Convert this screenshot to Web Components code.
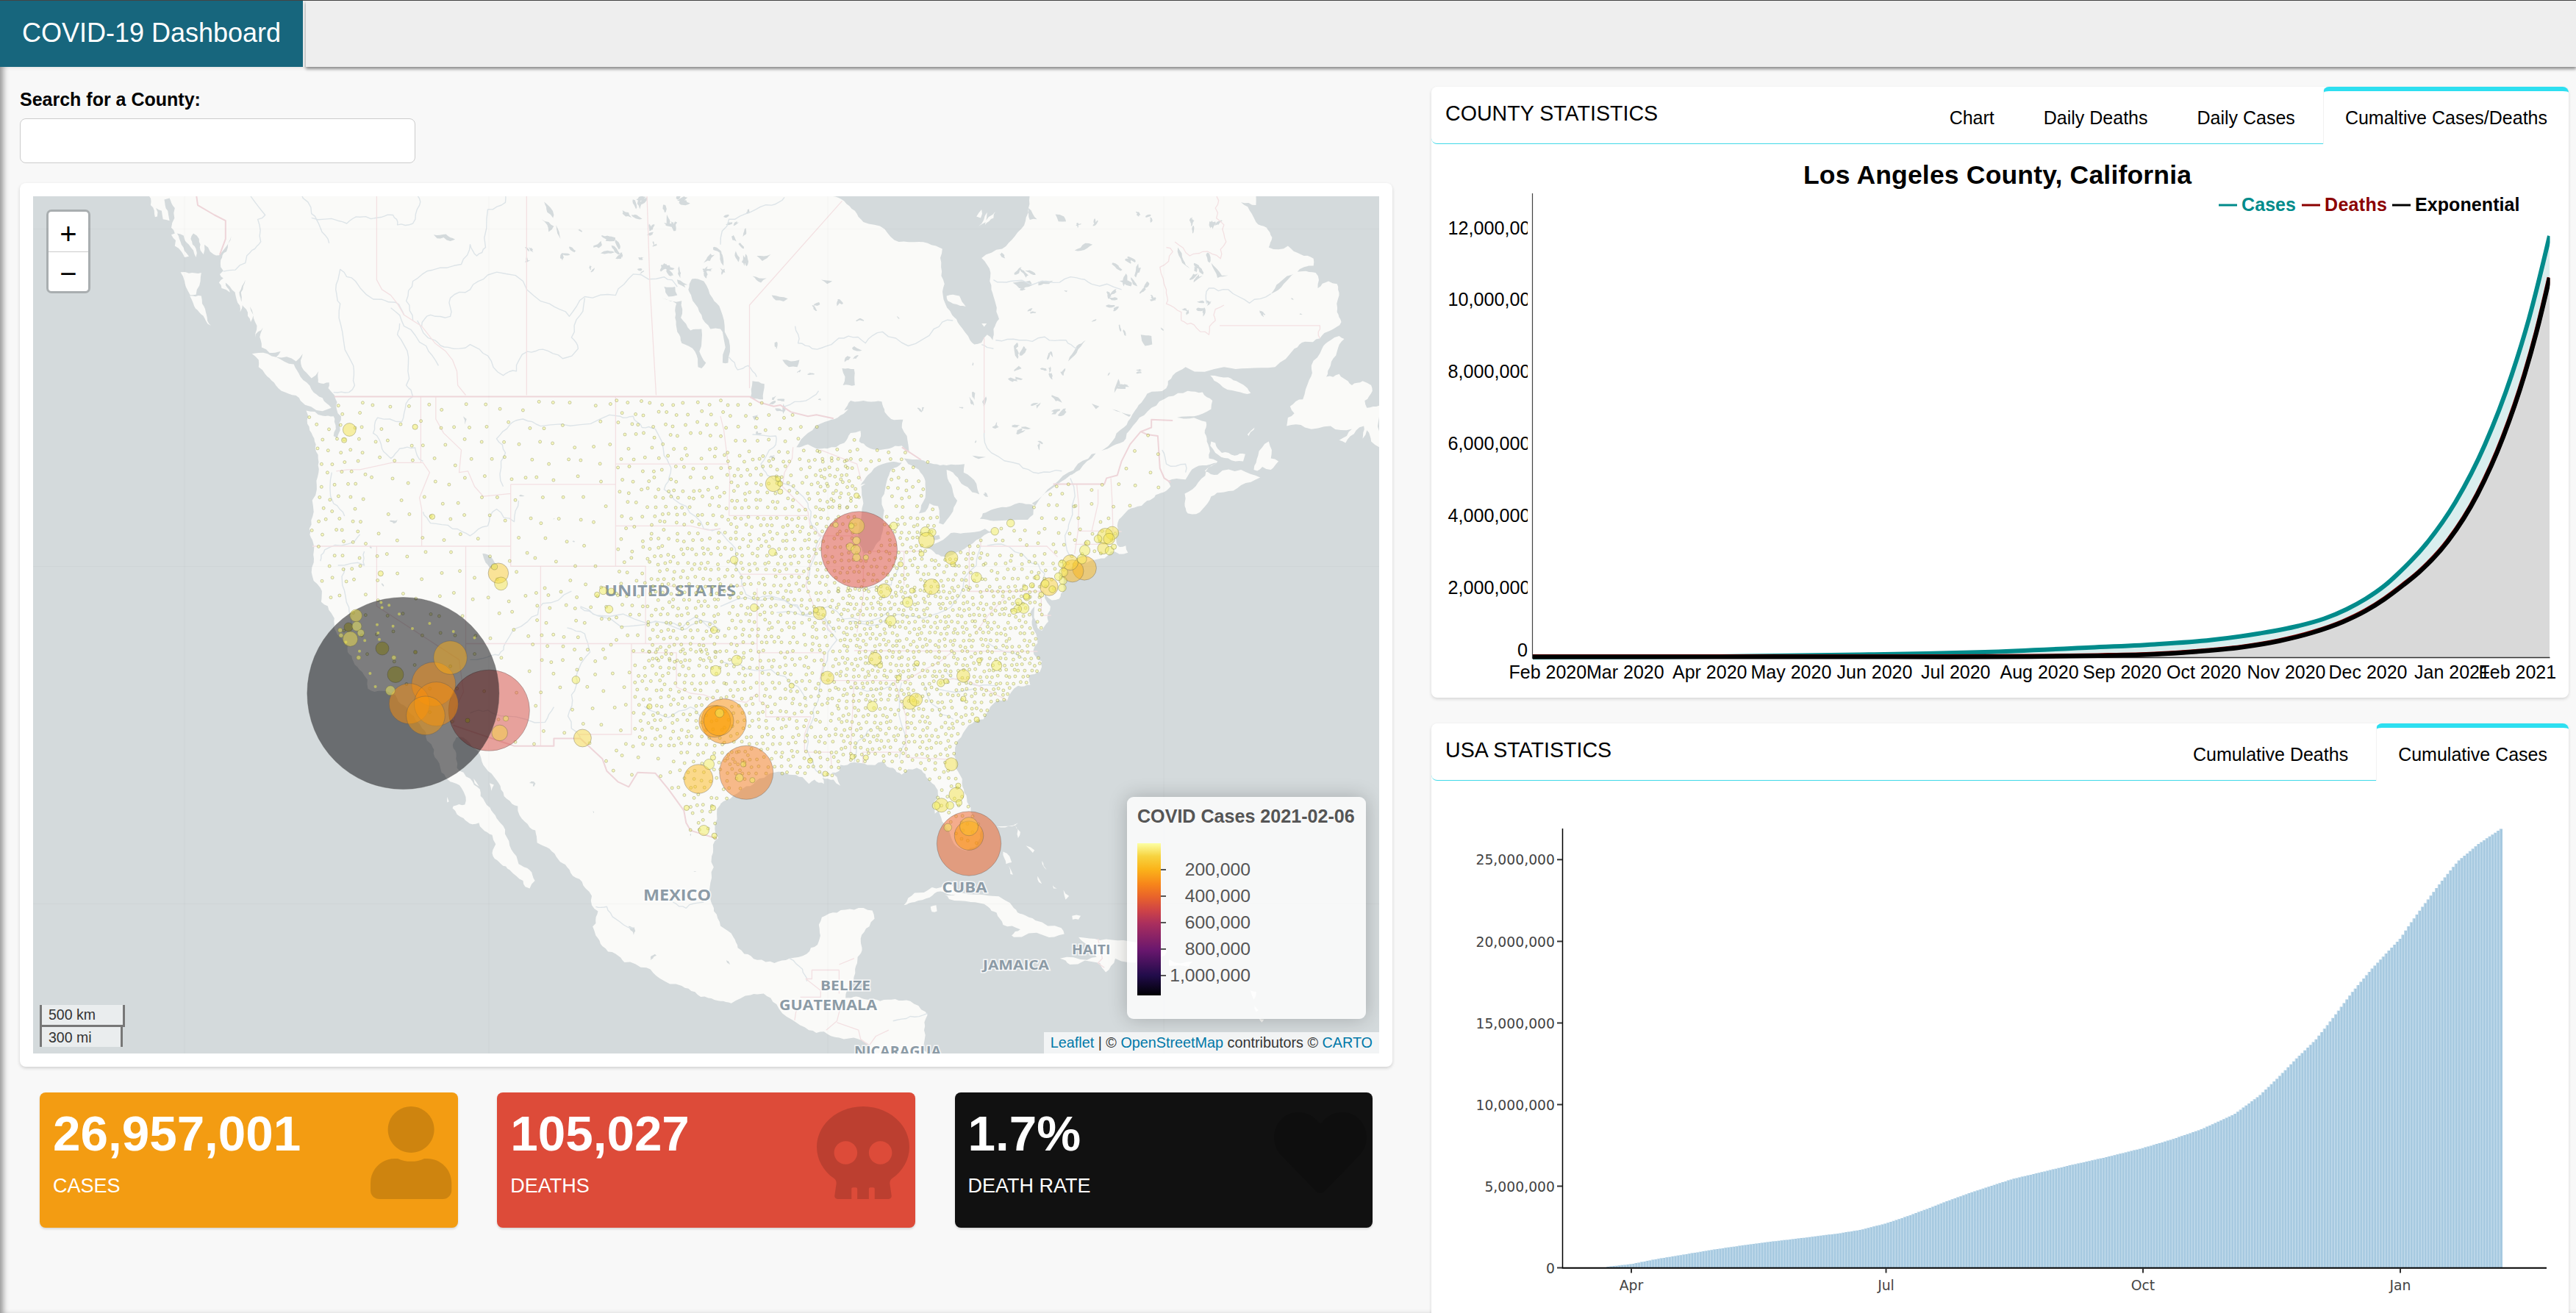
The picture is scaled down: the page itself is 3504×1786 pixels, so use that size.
<!DOCTYPE html>
<html lang="en">
<head>
<meta charset="utf-8">
<title>COVID-19 Dashboard</title>
<style>
html,body{margin:0;padding:0}
body{background:#f8f8f8;font-family:"Liberation Sans",Arial,sans-serif;color:#000;width:3504px;height:1786px;overflow:hidden}
</style>
</head>
<body>
<dash-app></dash-app>
<script>
const make=(name,html,init)=>{
  const t=document.createElement('template');t.innerHTML=html;
  customElements.define(name,class extends HTMLElement{
    constructor(){super();this.attachShadow({mode:'open'}).append(t.content.cloneNode(true));}
    connectedCallback(){if(init&&!this.ready){this.ready=true;init(this,this.shadowRoot);}}
  });
};

/* ---------- geography helpers ---------- */
const sheets={
  a:(x,y)=>[40+x/1.668,260+y/2.613],
  b:(x,y)=>[980+x/1.723,260+y/2.613],
  c:(x,y)=>[40+x/1.668,800+y/2.412],
  d:(x,y)=>[980+x/1.704,800+y/2.412]
};
const pts=s=>{
  let f=sheets.a;const out=[];
  s.trim().split(/\s+/).forEach(k=>{
    if(sheets[k]){f=sheets[k];return;}
    const [x,y]=k.split(',').map(Number);out.push(f(x,y));
  });
  return out;
};
let seed=7;
const rnd=()=>{seed|=0;seed=seed+0x6D2B79F5|0;let t=Math.imul(seed^seed>>>15,1|seed);t=t+Math.imul(t^t>>>7,61|t)^t;return((t^t>>>14)>>>0)/4294967296;};
const rough=(p,closed,amp)=>{
  for(let k=0;k<2;k++){
    const o=[];const n=p.length;
    for(let i=0;i<n;i++){
      o.push(p[i]);
      if(i===n-1&&!closed)break;
      const q=p[(i+1)%n],dx=q[0]-p[i][0],dy=q[1]-p[i][1],l=Math.hypot(dx,dy);
      if(l>7&&l<120){const j=(rnd()-.5)*amp*l;o.push([p[i][0]+dx/2-dy/l*j,p[i][1]+dy/2+dx/l*j]);}
    }
    p=o;
  }
  return p;
};
const d=(p,z)=>'M'+p.map(q=>q[0].toFixed(1)+' '+q[1].toFixed(1)).join('L')+(z?'Z':'');
const inside=(x,y,p)=>{let c=false;for(let i=0,j=p.length-1;i<p.length;j=i++){if((p[i][1]>y)!==(p[j][1]>y)&&x<(p[j][0]-p[i][0])*(y-p[i][1])/(p[j][1]-p[i][1])+p[i][0])c=!c;}return c;};

const west='a 692,725 698,750 697,775 707,800 705,850 698,878 690,870 692,820 690,800 665,798 628,780 630,815 640,860 650,900 655,950 656,1000 652,1060 645,1140 635,1200 642,1240 646,1265 645,1320 640,1355 645,1385 660,1410 662,1460 685,1500 692,1540 c 706,160 722,185 722,210 735,240 755,275 767,300 768,330 800,337 830,350 850,385 872,420 885,445 ';
const gulf='c 1563,820 1555,790 1560,725 1568,710 d 0,708 30,680 60,650 90,625 110,612 125,605 160,612 190,620 205,642 218,628 240,642 236,622 262,628 278,648 270,620 258,605 275,600 278,580 310,572 340,580 375,570 400,590 420,612 455,590 475,610 490,640 500,655 502,690 493,715 497,740 505,730 520,775 535,820 550,850 570,862 590,850 602,820 598,770 580,720 570,680 560,640 545,590 542,550 550,500 575,450 610,430 625,390 640,370 665,368 690,320 718,318 715,285 740,275 745,240 725,205 735,180 722,120 718,80 728,60 735,130 745,140 760,110 765,60 748,0 768,40 785,35 b 805,1415 803,1370 830,1330 870,1312 900,1305 915,1280 935,1290 955,1285 950,1260 935,1265 925,1230 930,1190 945,1150 970,1125 1000,1100 1020,1080 1045,1065 1055,1050 ';
const mainland=pts('a 268,5 275,50 285,92 290,90 287,60 300,70 303,100 318,105 314,70 306,30 318,25 330,60 322,130 330,150 322,155 332,175 330,195 345,215 352,235 362,232 345,190 335,150 350,158 362,190 378,235 378,205 366,170 372,150 385,170 388,210 395,225 397,190 410,215 418,225 430,228 445,200 458,160 447,215 434,245 434,270 440,283 432,295 440,310 430,325 436,345 455,360 445,325 455,340 470,385 478,430 484,400 476,360 490,315 480,360 492,420 502,465 508,440 500,410 512,465 512,520 530,485 525,530 527,555 545,575 570,570 560,590 605,605 620,578 618,625 640,665 656,640 655,680 680,680 678,700 '+west+
 ' 900,475 902,500 918,530 930,575 935,605 955,635 980,655 990,685 988,710 962,715 960,722 985,755 1005,775 1020,770 1028,790 1050,810 1058,840 1052,880 1070,905 1090,925 1105,945 1120,960 1125,980 1135,985 1147,960 1135,925 1110,905 1105,880 1088,830 1075,780 1060,755 1045,720 1033,700 1022,660 1000,625 985,605 970,590 968,560 962,525 968,490 985,490 1000,510 1022,545 1035,590 1060,630 1075,670 1095,708 1108,715 1112,745 1135,785 1148,795 1152,835 1180,855 1200,890 1220,915 1240,950 1262,985 1276,1010 1276,1040 1290,1060 1285,1100 1278,1110 1285,1140 1300,1175 1330,1200 1350,1228 1400,1245 1430,1280 1480,1305 1510,1325 1540,1345 1568,1355 d 25,1362 70,1335 100,1330 130,1365 165,1415 205,1450 240,1455 275,1475 320,1480 345,1500 355,1545 490,1545 470,1515 472,1450 480,1400 475,1390 440,1355 405,1348 370,1355 340,1350 315,1340 290,1345 303,1300 312,1250 318,1210 328,1180 325,1150 345,1110 357,1085 352,1058 310,1055 270,1065 235,1080 230,1130 225,1170 200,1200 160,1215 125,1230 85,1220 55,1200 40,1180 30,1145 0,1108 c 1553,1060 1545,1020 1548,950 1548,880 1555,830 '+gulf+
 ' 1048,1030 1090,1025 1100,1000 1130,975 1165,965 1135,995 1165,1008 1220,990 1265,1018 1220,1045 1180,1070 1150,1085 1130,1130 1115,1148 1095,1145 1088,1110 1088,1075 1120,1035 1145,980 1165,960 1145,950 1143,900 1135,860 1138,820 1100,808 1070,805 1110,800 1150,775 1153,745 1130,715 1095,710 1050,730 1010,770 975,820 950,880 920,905 870,950 830,1000 822,1010 830,985 870,935 918,890 945,840 965,795 980,760 1000,720 1045,700 1060,655 1090,625 1180,625 1235,630 1300,625 1345,560 1370,535 1405,523 1430,495 1455,465 1445,430 1450,370 1445,330 1425,320 1400,345 1395,290 1365,285 1320,330 1290,365 1310,325 1350,290 1390,265 1390,240 1360,225 1330,195 1285,200 1293,165 1280,130 1255,110 1245,80 1220,40 1255,50 1255,5');
const lands=[
 'a 505,578 520,575 560,590 600,615 615,660 640,705 665,735 685,770 665,782 615,745 612,735 580,715 555,680 535,650 520,625 520,600',
 'a 343,288 362,292 390,290 388,320 380,350 378,368 365,370 355,340 352,320',
 'a 364,372 390,372 392,400 402,440 412,478 400,460 385,430 372,400',
 'b 1450,515 1462,525 1445,570 1430,620 1420,660 1450,650 1460,665 1480,690 1505,675 1525,690 1528,710 1510,745 1515,770 1544,762 1544,910 1525,890 1515,850 1505,880 1508,835 1490,850 1465,895 1450,885 1480,845 1430,835 1370,840 1327,835 1330,805 1345,790 1335,765 1365,740 1380,670 1385,620 1410,560 1430,530',
 'b 1148,655 1190,662 1215,680 1235,700 1243,718 1210,712 1170,685',
 'b 1150,890 1160,895 1175,930 1205,940 1230,935 1225,960 1190,950 1160,930 1148,905',
 'b 1250,990 1260,940 1285,890 1292,920 1290,950 1308,960 1290,990 1270,980 1258,994',
 'b 530,372 545,368 560,372 575,410 562,408 545,400 533,390',
 'b 600,90 612,65 610,95','b 605,125 625,75 622,110','b 620,120 645,72 640,95','b 612,470 624,470 618,482',
 'b 1235,865 1252,840 1250,848 1238,870',
 'd 425,1040 450,1000 490,982 530,970 590,1005 630,1010 680,1050 700,1070 730,1090 790,1115 797,1135 750,1140 680,1145 675,1140 695,1120 655,1105 640,1065 620,1045 580,1030 530,1020 520,1005 545,1005 510,995 485,1015 450,1030',
 'd 487,1045 500,1040 502,1060 490,1062','d 830,1145 880,1155 935,1155 1000,1175 1035,1190 1030,1205 975,1220 915,1215 905,1240 893,1260 880,1230 810,1235 787,1215 850,1220 872,1210 850,1170',
 'd 1040,1218 1095,1225 1085,1243 1040,1240','d 655,865 670,880 675,900 662,905','d 668,910 678,940 672,938','d 815,1075 835,1075 830,1087 816,1087','d 640,782 690,770 660,785','d 680,770 695,800 690,820','d 708,845 728,860 724,868','d 735,945 745,970 738,965','d 795,990 808,1010 800,1022','d 745,895 756,925 750,915','d 770,975 780,985 772,985',
 'd 1228,1320 1242,1325 1236,1350','d 1238,1370 1247,1385 1242,1390','d 1248,1410 1260,1415 1255,1425','c 948,685 952,700 948,703','c 1008,625 1020,650 1010,640','c 1044,640 1054,645 1048,665'
];
const lakes=[
 'b 262,5 262,18 290,35 315,70 335,110 385,135 418,180 465,180 505,195 520,205 517,270 525,330 523,385 543,440 560,475 585,530 595,545 612,538 625,510 638,530 640,490 653,455 645,400 635,350 633,290 612,238 660,205 690,160 715,105 722,60 722,5',
 'b 178,910 205,860 245,820 275,805 300,775 290,780 305,745 345,748 378,748 385,785 400,810 428,812 425,840 437,870 440,900 442,928 425,905 395,915 375,920 345,910 325,890 328,852 305,860 290,895 250,915 225,915 205,900',
 'b 425,965 400,990 390,1030 378,1090 382,1180 375,1240 355,1280 335,1288 325,1250 325,1180 335,1110 330,1050 340,1040 328,1045 345,1010 360,985 380,970 400,962',
 'b 430,950 470,955 500,970 530,975 572,970 570,1000 600,1040 607,1078 590,1070 565,1040 545,1000 530,990 532,1020 545,1070 555,1100 540,1150 522,1185 512,1180 510,1120 490,1110 480,1140 465,1145 480,1090 480,1030 465,990 440,970',
 'b 480,1265 505,1290 530,1303 560,1280 600,1240 638,1212 620,1200 570,1215 540,1215 500,1255','b 497,1225 512,1222 515,1235 500,1240',
 'b 608,1165 640,1172 720,1168 733,1150 732,1115 700,1108 680,1120 640,1130 615,1145','b 730,1110 780,1045 830,990 832,1000 785,1048 738,1118',
 'a 1503,312 1530,320 1550,380 1568,420 b 10,500 20,530 18,610 5,610 5,500 a 1568,490 1545,490 1525,440 1505,390 1495,350',
 'a 1435,380 1455,392 1480,390 1478,450 1500,495 1525,490 1520,570 1535,610 1525,630 1517,625 1510,570 1480,540 1470,500 1465,450 1468,400',
 'a 1440,340 1465,340 1470,370 1450,375','a 1028,1288 1040,1292 1052,1310 1060,1345 1045,1340 1035,1320','a 917,155 945,153 966,172 955,178 940,165 925,168',
 'a 1162,100 1178,110 1190,125 1178,145 1175,120','a 1168,38 1190,85 1188,95 1175,75','a 1195,120 1205,170 1198,150',
 'b 285,630 313,632 315,690 287,690 292,660','b 685,325 725,318 730,335 700,345','b 745,322 780,318 770,330 745,335','b 1150,255 1175,300 1190,300 1165,308','b 1072,200 1085,245 1100,275 1082,255',
 'b 830,210 855,185 872,190 845,212','b 785,82 805,90 810,108 792,108','b 722,60 742,100 725,102','b 870,755 888,765 880,775','b 75,675 103,685 100,740 70,735 72,705','b 815,605 835,550 856,530 835,575','b 75,800 88,795 80,815','b 590,940 622,945 605,952','b 985,510 1010,515 1012,545 995,550','b 918,775 962,795 958,802',
 'b 120,370 158,382 148,392 130,388','b 145,600 165,605 185,600 180,625 160,625','b 75,302 108,310 95,325','b 85,230 118,225 98,248','b 236,315 262,320 250,330','a 984,800 992,810 988,830'
];
const blobs='b 45,170 12 45,222 14 10,278 9 65,70 7 25,100 10 222,408 9 275,396 9 327,457 8 417,450 5 132,546 9 308,580 11 185,640 6 215,645 7 128,745 9 232,740 6 150,765 12 470,778 8 565,770 5 660,230 9 715,295 14 712,345 9 730,430 8 810,355 5 836,120 7 880,112 9 1103,122 10 1155,118 12 980,80 8 1005,95 8 948,250 14 965,300 16 985,340 12 1015,375 9 925,400 12 915,370 10 875,460 6 942,495 9 705,570 14 775,585 9 800,640 9 770,650 10 690,655 12 785,765 14 740,765 9 605,750 12 712,850 12 690,840 9 745,900 8 650,830 9 598,890 6 940,680 16 980,640 8 910,650 5 1125,260 14 1120,300 14 1120,410 10 1090,425 8 1140,400 8 1270,435 8 1340,383 5 620,1080 7 592,615 5 1360,437 4 1035,490 5 120,945 7 90,860 7 a 1135,215 9 1125,248 7 1220,230 11 1274,275 7 1302,195 16 1348,210 14 1345,235 8 1392,245 7 1390,285 7 1370,60 14 1385,35 14 1400,135 10 1420,190 7 1455,90 16 1455,130 10 1490,38 14 1312,160 9 1440,285 14 1462,300 14 1560,235 16 1545,270 12 1250,140 6 825,1168 8 774,1265 6 1117,1082 6 1408,1318 4 802,1400 5 1235,1245 4 1190,1165 3 d 18,1228 6 c 1365,1125 9 1410,1215 9 1143,640 7 1280,735 3 1510,930 3 1500,810 3';
const admin=[
 'a 788,5 788,315 800,350 820,370 835,400 850,440 875,465 890,480 920,540 945,570 960,600 970,640 972,690 990,725','a 1128,5 1128,725','a 1401,5 1408,340 1422,725','b 285,35 68,405 68,700','b 618,520 618,860',
 'a 888,730 888,965','a 696,995 722,990 750,990 822,965 893,965 908,1000 885,1090 890,1130 890,1262','a 922,730 922,810 940,860 980,920 975,1000 995,995 1010,1050 1030,1085 1092,1075','a 1092,1042 1330,1042 1330,730','a 1092,1042 1092,1333 1330,1333 1330,1042','a 642,1262 1092,1262','a 788,1262 788,1475 c 975,235 985,340 965,400 965,440','a 990,1262 c 990,182 990,225','a 1330,970 1568,970 b 18,970','a 1330,1190 1500,1190 1540,1205 1568,1200','a 1330,1333 1398,1333 1398,1404 1568,1404 b 55,1404','a 1160,1333 c 1160,518','c 990,182 1568,182 d 85,182','c 1366,182 1366,480 1245,480','c 1366,212 1468,212 1468,325 1500,345 1530,350 1568,370','c 1398,0 1398,182',
 'b 0,800 8,850 18,970 22,1010 20,1153','b 20,1153 205,1153','b 45,1362 195,1362','b 228,1225 325,1225','b 583,1260 583,1423 750,1423','b 610,1240 610,1262 765,1262 790,1300','b 345,1280 470,1280','b 430,1280 430,1400','b 170,910 168,950 150,1000 145,1050 205,1140 210,1190 240,1230 210,1320 200,1400 225,1500 260,1568','b 335,1280 335,1440 320,1568','b 235,920 320,970 330,1030','b 915,1020 918,1100 920,1210','b 838,1208 920,1208 940,1210','b 830,1255 900,1255','b 835,1040 840,1120 838,1210 830,1290','b 752,1423 752,1508 775,1508','b 885,1060 885,1110 870,1210',
 'd 85,0 85,212 240,212 240,242 230,300','d 90,212 90,370 105,385 105,422 210,422','d 85,345 60,375 0,360','d 235,303 440,303','d 510,303 560,295 590,315 665,368','d 310,205 735,208','d 310,303 300,570','d 403,303 430,420 430,555 530,562','d 195,538 255,538 258,590','d 330,575 330,538 420,538','d 430,303 470,270 510,240 540,205','d 210,422 195,480 195,538','d 575,10 750,10','d 660,30 620,90 590,150','d 875,1150 885,1215 875,1230 890,1245',
 'd 275,1253 212,1253 212,1282 198,1282 232,1320 232,1342 185,1342','d 275,1253 275,1330','d 172,1418 175,1390 185,1370','d 245,1450 270,1420 275,1392 280,1370','d 270,1425 320,1450 325,1480 345,1500 360,1470 390,1450','d 275,1235 310,1215'
];
const nation=['a 692,730 1568,730 b 68,730 90,750 125,765 140,760 165,785 205,800 225,795 265,808','b 780,1041 900,1041 905,1020 930,1010 940,960 960,900 985,855 1000,865 1025,870 1030,985 1040,1020 1055,1035','b 985,855 1010,840 1010,812 1060,815','c 962,450 1100,518 1190,518 1190,493 1250,493 1300,560 1310,600 1335,635 1360,652 1380,605 1420,607 1450,660 1485,730 1490,770 1500,795 1560,822','a 378,5 382,50 420,85 445,105 445,170 432,225','b 425,910 470,955'];
const labrador=['b 1165,5 1160,60 1180,120 1185,180 1172,240 1130,215 1100,230 1065,180','b 1045,200 1060,215 1030,270 1045,350 1045,400 1080,430 1080,460 1110,475 1145,510 1160,460 1160,420 1180,405','b 1170,478 1405,478 1405,523'];
const rivers=['a 502,18 535,85 518,100 525,180 505,210 490,255 440,285','a 615,5 640,80 660,130 680,185','a 640,95 700,105 720,115 750,92 800,92 825,85 835,120 870,115 885,50 878,5','a 1080,5 1080,40 1040,65 1035,200 1015,230 1000,190 980,260 915,280 870,320 855,390 870,460','a 690,715 725,715 738,690 735,620 710,500 705,400 695,350 705,278 740,320 800,385 830,395 850,440','a 820,415 850,480 900,550 928,620','a 890,480 910,440 955,445 955,380 1000,350 1040,298 1120,320 1180,400 1225,445 1260,375 1330,370 1370,295 1440,305 1470,340','a 880,460 920,530 950,555 1000,545 1040,585 1075,655 1105,640 1130,570 1165,562 1210,595 1245,560 1230,520 1250,440 1260,380','a 840,470 835,510 860,590 855,690 870,730 850,790 845,820 790,805 780,860 800,915 820,950 840,915 875,912 893,960','a 1075,1050 1070,960 1080,930 1060,880 1090,830 1120,810 1160,835 1250,830 1340,800 1370,800 1390,840 1420,845 1440,940 1455,1000 1440,1060 1490,1120 1530,1200 1568,1200','a 893,1140 910,1180 960,1200 1000,1225 1040,1190 1060,1130 1100,1175 1110,1100','a 660,1315 670,1275 720,1255 750,1220','a 700,1330 760,1330 760,1280','a 686,1000 690,1110 715,1155','a 715,1340 710,1400 725,1480 730,1540','a 1250,1480 1290,1510 1400,1540 1480,1560 1520,1525 1568,1560',
 'c 1000,235 1030,230 1065,220 1080,180 1130,110 1165,50 1230,10','c 1220,130 1260,150 1272,210 1240,290 1230,350 1222,420 1250,490','c 1000,410 1040,400 1080,420 1170,440 1190,390','c 1250,60 1290,90 1400,115 1480,130 1510,95 1568,140','c 1395,388 1450,425 1500,390 1530,430','c 1285,1045 1310,1045 1330,1085 1370,1115','c 1460,1030 1490,1050 1530,1030',
 'b 0,190 20,100 70,75 120,50 150,22','b 175,480 182,540 215,560 260,545 300,515 340,540 380,500 440,550 500,490 545,460','b 20,590 40,635 65,620 85,660','b 640,315 680,320 780,325 835,308 870,330 940,350','b 645,530 700,530 760,518 810,530 835,560','b 1140,400 1145,345 1190,350 1240,398 1290,365','b 618,850 635,930 700,970 745,1003 800,995','b 150,765 200,745 230,710','b 75,865 130,870 125,910 95,970 110,1010 150,1040 205,1110 210,1170 235,1230 215,1320 200,1400','b 0,1210 35,1270 50,1400 80,1455 150,1455 200,1510 250,1530 270,1568','b 1035,920 1045,970 1090,970 1090,1000','b 820,1020 825,1150 815,1200 820,1300','b 610,1260 600,1330 560,1440 510,1500 440,1510 350,1545 300,1530','b 640,560 612,545','b 340,1420 400,1400 420,1320','b 625,1260 660,1255 720,1310 760,1360 750,1410',
 'd 0,60 80,40 150,40 200,90 240,90 270,170 240,260 215,400 200,480 215,570 240,620','d 0,240 80,270 150,290 200,370','d 130,80 250,60 330,110 400,60','d 300,330 380,330 400,310','d 470,310 490,380 540,430','d 420,310 420,450 415,560','d 350,460 320,500 310,570','d 500,330 590,330','d 520,270 600,320 640,320','d 620,180 700,230','d 400,1420 440,1405 480,1395','d 160,1215 190,1250 200,1290'];
const us=pts(west+' 962,450 1100,518 1190,518 1190,493 1250,493 1300,560 1310,600 1360,652 1380,605 1420,607 1450,660 1485,730 1500,795 1560,822 '+gulf+' 1040,1020 1028,960 1025,870 985,855 940,960 930,1010 900,1020 900,1041 780,1041 b 732,1115 640,1172 635,1210 560,1280 505,1290 480,1265 515,1180 545,1100 500,970 430,925 395,915 325,850 265,808 205,800 165,785 125,765 68,730 a 692,730');

const big=`c 1043,401 92 #d4483f
c 848,345 218 #000004
b 325,1274 89 #db4538
c 917,315 50 #f98e09
c 862,379 46 #f98e09
c 923,380 50 #f98e09
c 899,418 44 #f99a0a
c 955,228 38 #fbac11
d 60,605 61 #f4771a
d 576,838 73 #ee5d21
d 576,812 33 #fb9706
d 576,782 21 #fbc127
d 8,437 51 #f98e09
c 1555,437 36 #fb9b06
c 1564,435 34 #fba40a
c 1518,626 33 #fbb81c
a 1064,1358 23 #f9cb35
b 853,1340 28 #fbb81c
b 825,1350 26 #fbb81c
b 820,1320 18 #f6d746
b 770,1406 21 #f8cd37
c 1255,492 20 #f6d746
c 1067,475 18 #f6d746`;
const mid='a 726,848 15 714,885 6 875,838 6 914,1157 6 1070,1395 15 1055,1335 7 797,1359 6 1302,1420 9 1320,1422 7 1288,1434 6 1315,1486 9 1553,1560 8 c 741,90 14 743,125 11 728,167 17 752,147 8 705,138 5 707,155 5 747,228 5 827,228 5 819,336 11 1081,428 6 1240,301 9 1407,388 6 1542,578 12 1551,556 6 1491,721 6 1551,721 6 1530,795 12 1554,812 6 1557,271 12 1566,410 10 d 38,237 12 248,294 15 358,232 15 370,254 6 78,64 9 230,82 15 221,72 6 395,107 12 434,46 12 563,288 15 640,254 12 600,237 6 511,311 9 523,305 6 439,375 16 453,366 15 352,388 12 563,363 6 594,431 6 455,246 6 413,294 6 165,320 6 535,578 15 547,678 17 512,712 16 500,714 9 532,713 9 551,648 6 553,704 7 527,785 9 306,553 6 337,556 6 243,609 6 208,566 6 53,578 6 44,622 9 74,630 6 703,66 12 691,45 8 710,30 8 689,68 9 680,76 7 b 124,1040 18 135,1022 6 140,1040 6 140,1068 6 319,1082 6 319,1190 18 307,1190 6 319,1242 9 304,1264 9 317,1275 11 319,1302 9 341,1302 6 270,1186 6 406,1190 9 480,1210 11 496,1213 9 483,1241 18 471,1289 6 545,1326 6 541,1303 15 422,1326 6 680,1180 9 643,1209 9 600,1373 12 495,1406 18 384,1420 16 449,1420 6 122,1283 9 32,1311 9 918,1215 15 902,1226 18 885,1236 9 911,1236 13 897,1270 13 912,1278 10 922,1264 6 854,1277 12 847,1308 11 804,1355 10 803,1385 9 801,1410 9 801,1325 9 792,1370 9 742,1373 6 730,1401 6 714,1410 6 761,1395 9 778,1415 8 860,1250 6 752,1434 6 717,1440 7';
const tinyOverBay='789,120 791,147 794,168 800,64 816,56 839,85 825,125 869,133 908,116 962,142 761,172 749,207 773,280 785,323 798,47 718,177 1010,163';
const zones=[ // x0 y0 x1 y1 spacing
 [410,540,500,800,16],[500,540,837,640,25],[500,640,720,800,26],[720,640,837,800,28],[410,800,720,880,25],[410,880,720,1020,38],[720,800,837,900,18],[720,900,861,1020,26],[820,1020,910,1080,22],
 [837,540,985,660,15],[837,660,880,740,17],[880,660,985,740,11.5],[837,740,880,870,15],[880,740,985,900,10.2],[861,880,985,1020,10.7],[910,1020,1020,1170,11.5],
 [985,540,1110,620,17],[985,620,1160,700,11],[985,700,1140,860,10],[985,860,1140,1060,10.4],
 [1110,580,1300,700,13],[1140,700,1340,800,9.4],[1140,800,1420,960,8.3],[1140,960,1330,1030,8.9],[1140,1030,1400,1160,12],
 [1340,650,1460,760,16],[1340,760,1470,800,11],[1460,580,1620,700,24],[1460,700,1560,770,15],[1330,960,1430,1030,9.5]
];

make('geo-canvas',`<style>:host{display:block;width:1831px;height:1166px}svg{display:block}
text{font-family:"Open Sans","Noto Sans",sans-serif;font-weight:700;fill:#8c9ba6;paint-order:stroke;stroke:#fff;stroke-opacity:.75;stroke-width:3px}</style>
<svg width="1831" height="1166" viewBox="45 267 1831 1166"></svg>`,(el,r)=>{
  const svg=r.querySelector('svg');let h='<rect x="45" y="267" width="1831" height="1166" fill="#d4dadc"/>';
  h+='<path fill="#fafaf8" d="'+d(rough(mainland,true,.28),true)+'"/>';
  const lk=lakes.map(pts);
  h+='<path fill="#d4dadc" d="'+lk.map(p=>d(rough(p,true,.2),true)).join('')+'"/>';
  h+='<path fill="#fafaf8" d="'+lands.map(s=>d(rough(pts(s),true,.26),true)).join('')+'"/>';
  let f=sheets.a,bp='';const tk=blobs.split(' ');
  for(let i=0;i<tk.length;){
    if(sheets[tk[i]]){f=sheets[tk[i++]];continue;}
    const [x,y]=f(...tk[i].split(',').map(Number)),s=+tk[i+1];i+=2;
    const n=s>9?3:s>6?2:1;
    for(let k=0;k<n;k++){
      const cx=x+(rnd()-.5)*s*(n-1)*.8,cy=y+(rnd()-.5)*s*(n-1)*.8,tilt=rnd()*3.1,q=[];
      for(let a=0;a<9;a++){const t=a/9*6.283,rr=s*.42*(.4+rnd()*.9),u=Math.cos(t)*rr*1.3,v=Math.sin(t)*rr*.5;q.push([cx+u*Math.cos(tilt)-v*Math.sin(tilt),cy+u*Math.sin(tilt)+v*Math.cos(tilt)]);}
      bp+=d(q,true);
    }
  }
  h+='<path fill="#d4dadc" d="'+bp+'"/>';
  h+='<g fill="none" stroke-linejoin="round"><path stroke="#dde4e8" stroke-width="1.4" d="'+rivers.map(s=>d(rough(pts(s),false,.3))).join('')+'"/>';
  h+='<path stroke="#f3e0e2" stroke-width="1.3" d="'+admin.map(s=>d(pts(s))).join('')+labrador.map(s=>d(rough(pts(s),false,.4))).join('')+'"/>';
  h+='<path stroke="#eed5d9" stroke-width="2" d="'+nation.map(s=>d(pts(s))).join('')+'"/>';
  h+='<path stroke="#000" stroke-opacity=".025" d="M251 267V1433M665 267V1433M1126 267V1433M1583 267V1433M45 311.500H1876M45 770.500H1876M45 1229.500H1876"/></g>';
  const T=(x,y,w,s,t)=>`<text x="${x}" y="${y}" font-size="${s}" textLength="${w}" lengthAdjust="spacingAndGlyphs">${t}</text>`;
  h+=T(822,811,179,20.5,'UNITED STATES')+T(875,1225,92,20.5,'MEXICO')+T(1281.5,1213.500,61,19.500,'CUBA')+T(1458,1297.500,52.500,17,'HAITI')+T(1337,1319,90,17.500,'JAMAICA')+T(1116,1347,68,18,'BELIZE')+T(1060,1373.500,133,19,'GUATEMALA')+T(1162,1437,118,19,'NICARAGUA');
  let dots='';
  const C=(x,y,rad)=>`M${(x-rad).toFixed(1)} ${y.toFixed(1)}a${rad} ${rad} 0 1 0 ${2*rad} 0a${rad} ${rad} 0 1 0 ${-2*rad} 0`;
  zones.forEach(([x0,y0,x1,y1,s])=>{
    let row=0;
    for(let y=y0+s/2;y<y1;y+=s,row++)for(let x=x0+(row%2?s*.75:s*.3);x<x1;x+=s){
      const px=x+(rnd()-.5)*s*.6,py=y+(rnd()-.5)*s*.5;
      if(rnd()<.05)continue;
      if(!inside(px,py,us)||lk.some(p=>inside(px,py,p)))continue;
      dots+=C(px,py,2);
    }
  });
  h+='<path fill="#f6f88a" fill-opacity=".5" stroke="#5c6420" stroke-opacity=".3" stroke-width="1" d="'+dots+'"/>';
  big.split('\n').forEach((l,i)=>{const [k,xy,rr,c]=l.split(' ');const [x,y]=sheets[k](...xy.split(',').map(Number));
    h+=`<circle cx="${x}" cy="${y}" r="${rr/(k==='b'?1.715:1.67)}" fill="${c}" fill-opacity=".5" stroke="#555" stroke-opacity=".35"/>`;
    if(i===1)h+='<g fill="#77720a" fill-opacity=".5" stroke="#333" stroke-opacity=".3"><circle cx="520" cy="882" r="9"/><circle cx="538" cy="917.500" r="11"/><circle cx="474" cy="853" r="6"/><circle cx="565" cy="887" r="2.500"/><circle cx="636" cy="980" r="3"/></g><path fill="#c8c860" fill-opacity=".8" d="'+tinyOverBay.split(' ').map(p=>C(...sheets.c(...p.split(',').map(Number)),2)).join('')+'"/>';
  });
  f=sheets.a;const mt=mid.split(' ');
  for(let i=0;i<mt.length;){
    if(sheets[mt[i]]){f=sheets[mt[i++]];continue;}
    const [x,y]=f(...mt[i].split(',').map(Number)),s=+mt[i+1];i+=2;
    h+=`<circle cx="${x.toFixed(1)}" cy="${y.toFixed(1)}" r="${(s/1.69).toFixed(1)}" fill="${s>12?'#f2e14c':'#f1ee5e'}" fill-opacity=".5" stroke="#6b6b30" stroke-opacity=".35"/>`;
  }
  svg.innerHTML=h;
});

make('zoom-control',`<style>:host{display:flex;flex-direction:column;width:54px;border:3.500px solid rgba(0,0,0,.2);border-radius:7px;background:#fff;background-clip:padding-box;overflow:hidden}
span{box-sizing:border-box;display:flex;align-items:center;justify-content:center;height:54px;padding-top:5px;font-size:40px;line-height:48px}span+span{border-top:1px solid #ccc}</style><span>+</span><span>−</span>`);

make('scale-bar',`<style>:host{display:block;font-size:19.500px;color:#333}div{box-sizing:border-box;border:3px solid #777;border-top:0;background:rgba(255,255,255,.5);padding-left:9px;line-height:27px}
.k{width:116px;height:30px}.m{width:113px;height:27px;border-bottom:0;line-height:29px}</style><div class="k">500 km</div><div class="m">300 mi</div>`);

make('map-attribution',`<style>:host{display:block;background:rgba(255,255,255,.7);font-size:19.800px;line-height:29px;height:29px;padding:0 9px;color:#333;white-space:nowrap}a{color:#0078a8;text-decoration:none}</style><a>Leaflet</a> | © <a>OpenStreetMap</a> contributors © <a>CARTO</a>`);

make('case-legend',`<style>:host{display:block;box-sizing:border-box;width:325px;height:302px;background:rgba(255,255,255,.8);border-radius:9px;box-shadow:0 0 26px rgba(0,0,0,.22);padding:9px 14px;color:#555}
b{display:block;font-size:25.100px;line-height:35px;white-space:nowrap}.row{display:flex;margin-top:19px;height:207px}
.bar{width:32px;background:linear-gradient(#fcffa4 0,#f7d340 8.500%,#fbb41a 17%,#f7851a 27%,#e9642a 35%,#cf4446 44%,#a92e5e 53%,#6a176e 70%,#210c4a 87%,#000004 100%)}
ul{margin:0;padding:18px 0 0;list-style:none;width:122px}li{height:36px;line-height:36px;margin:0;font-size:24.700px;display:flex;align-items:center;justify-content:space-between}
li i{width:7px;height:2px;background:#555}</style>
<b>COVID Cases 2021-02-06</b><div class="row"><div class="bar"></div><ul><li><i></i>200,000</li><li><i></i>400,000</li><li><i></i>600,000</li><li><i></i>800,000</li><li><i></i>1,000,000</li></ul></div>`);

make('map-card',`<style>:host{display:block;box-sizing:border-box;width:1867px;height:1202px;padding:18px;background:#fff;border-radius:8px;box-shadow:0 2px 4px rgba(0,0,0,.16)}
.map{position:relative;width:1831px;height:1166px;overflow:hidden}.map>*:not(geo-canvas){position:absolute}
zoom-control{left:18px;top:18px}scale-bar{left:9px;bottom:9px}map-attribution{right:0;bottom:0}case-legend{right:18px;bottom:47px}</style>
<div class="map"><geo-canvas></geo-canvas><zoom-control></zoom-control><scale-bar></scale-bar><case-legend></case-legend><map-attribution></map-attribution></div>`);

make('search-field',`<style>:host{display:block}label{display:block;font-weight:bold;font-size:25px;line-height:35px;height:36px}
input{display:block;box-sizing:border-box;width:538px;height:61px;margin:7px 0 0;border:1px solid #ccc;border-radius:8px;background:#fff;outline:0}</style><label><slot></slot></label><input type="text">`);

make('stat-tile',`<style>:host{display:flex;box-sizing:border-box;justify-content:space-between;width:568.500px;height:184px;padding:18px 8px 0 18px;border-radius:8px;color:#fff;background:var(--tile);box-shadow:0 2px 3px rgba(0,0,0,.13)}
.n{font-size:67.400px;font-weight:bold;line-height:75px;height:76px;white-space:nowrap}.l{font-size:27px;line-height:36px;margin-top:15px}
::slotted(svg){height:126px;margin-top:1px;fill:rgba(0,0,0,.15);flex:none}</style><div><div class="n"><slot name="value"></slot></div><div class="l"><slot></slot></div></div><slot name="icon"></slot>`);

make('nav-bar',`<style>:host{display:block;border-top:1px solid #444;background:#eee;height:90px}
header{display:flex;height:90px}h1{margin:0;width:412px;background:#17667d;color:#fff;font-weight:normal;font-size:36px;line-height:88px;text-align:center;flex:none}
div{flex:1;margin-left:4px;box-shadow:0 3px 4px rgba(0,0,0,.4)}</style><header><h1><slot></slot></h1><div></div></header>`);

make('tab-panel',`<style>:host{display:block;background:#fff;border-radius:8px;box-shadow:0 2px 4px rgba(0,0,0,.14)}
.top{display:flex;height:78px;box-sizing:border-box;border-radius:8px}
.lead{flex:1;display:flex;border-bottom:1.500px solid #40d9e8;border-radius:8px 0 0 8px;padding-left:19px;justify-content:space-between}
.t{font-size:28.600px;line-height:72px}.tabs{display:flex}.tabs span,.on{font-size:25px;line-height:84px;padding:0 29px;white-space:nowrap}.tabs span{margin-right:9px}
.on{box-sizing:border-box;border-top:6px solid #2ddff0;border-radius:8px 8px 0 0;line-height:72px;border-left:1px solid #f2f2f2}</style>
<div class="top"><div class="lead"><div class="t"></div><div class="tabs"></div></div><div class="on"></div></div><slot></slot>`,(el,r)=>{
  r.querySelector('.t').textContent=el.getAttribute('heading');
  const t=el.getAttribute('tabs').split('|');r.querySelector('.on').textContent=t.pop();
  t.forEach(x=>{const s=document.createElement('span');s.textContent=x;r.querySelector('.tabs').append(s);});
});

// Cubic Hermite curve through points that are unevenly spaced along x.
const smooth=p=>{
  const n=p.length,g=p.map((q,i)=>{
    if(i===0)return(p[1][1]-q[1])/(p[1][0]-q[0]);
    const h0=q[0]-p[i-1][0],s0=(q[1]-p[i-1][1])/h0;
    if(i===n-1)return s0*1.06;
    const h1=p[i+1][0]-q[0],s1=(p[i+1][1]-q[1])/h1;
    return(s0*h1+s1*h0)/(h0+h1);
  });
  let s='M'+p[0].join(' ');
  for(let i=0;i<n-1;i++){const k=(p[i+1][0]-p[i][0])/3;s+=`C${p[i][0]+k} ${p[i][1]+g[i]*k} ${p[i+1][0]-k} ${p[i+1][1]-g[i+1]*k} ${p[i+1][0]} ${p[i+1][1]}`;}
  return s;
};

make('county-chart',`<style>:host{display:block;height:753px}svg{display:block;font-family:"Liberation Sans",Arial,sans-serif}</style><svg width="1547" height="753" viewBox="1947 196 1547 753"></svg>`,(el,r)=>{
  const cases=[[2085,894],[2250,893.5],[2338,893],[2530,890.5],[2620,889],[2700,887],[2838,881],[2931,876.5],[3008,870.5],[3074,861.500],[3126,851.500],[3161.5,841.500],[3192,828.700],[3218,814.500],[3243.6,796.7],[3261.500,780.700],[3300,740],[3340,683],[3380,605],[3416.500,510],[3440,433.500],[3468,321]];
  const exp=[[2085,893.5],[2500,893.5],[2760,893.2],[2854,892],[2931,890],[2987,886.500],[3049,880.500],[3100,872],[3146,860.500],[3187,846],[3218,831],[3243.600,815],[3269,796],[3291,778],[3330,736],[3370,672.500],[3405,594.500],[3434,510],[3450,453],[3468,378]];
  let h='<clipPath id="p"><rect x="2084" y="260" width="1384.500" height="637"/></clipPath><clipPath id="y"><rect x="1947" y="196" width="131" height="753"/></clipPath>';
  h+=`<g clip-path="url(#p)"><path d="${smooth(cases)}V894H2085Z" fill="#d9eeee"/><path d="${smooth(exp)}V894H2085Z" fill="#d9d9d9"/><path d="M2084 894.500H3469" stroke="#333" stroke-width="1.500"/><path d="${smooth(cases)}" fill="none" stroke="#008b8b" stroke-width="6"/><path d="${smooth(exp)}" transform="translate(-.4 -.6)" fill="none" stroke="#8b0000" stroke-width="6"/><path d="${smooth(exp)}" fill="none" stroke="#000" stroke-width="6"/></g>`;
  h+='<path d="M2084.500 263V896" stroke="#444" stroke-width="1.200"/><text x="2453" y="250" font-size="35.500" font-weight="bold" textLength="528">Los Angeles County, California</text>';
  [[3018,3049,'Cases','#008b8b',74],[3131,3162,'Deaths','#8b0000',85],[3254,3285,'Exponential','#000',142.500]].forEach(([a,b,t,c,w])=>h+=`<path d="M${a} 279h25" stroke="${c}" stroke-width="3"/><text x="${b}" y="287" font-size="25" font-weight="bold" fill="${c}" textLength="${w}">${t}</text>`);
  h+='<g clip-path="url(#y)" font-size="25.200">';
  ['12,000,000','10,000,000','8,000,000','6,000,000','4,000,000','2,000,000'].forEach((t,i)=>h+=`<text x="1969.500" y="${318.500+i*97.900}">${t}</text>`);
  h+='<text x="2064" y="892.500">0</text></g><g font-size="25">';
  [[2052.500,'Feb 2020'],[2158,'Mar 2020'],[2275,'Apr 2020'],[2381.500,'May 2020'],[2498.500,'Jun 2020'],[2613,'Jul 2020'],[2720.500,'Aug 2020'],[2833,'Sep 2020'],[2947,'Oct 2020'],[3056.500,'Nov 2020'],[3167.500,'Dec 2020'],[3284,'Jan 2021'],[3371.500,'Feb 2021']].forEach(([x,t])=>h+=`<text x="${x}" y="923">${t}</text>`);
  r.querySelector('svg').innerHTML=h+'</g>';
});

make('usa-chart',`<style>:host{display:block;height:740px}svg{display:block;font-family:"DejaVu Sans",Verdana,sans-serif;font-size:18.800px;fill:#444}</style><svg width="1547" height="724" viewBox="1947 1062 1547 724"></svg>`,(el,r)=>{
  const k=[[255,1400],[288,1390],[320,1373],[360,1355],[405,1335],[460,1314],[520,1295],[570,1278],[600,1265],[633,1242],[660,1218],[690,1188],[720,1157],[750,1128],[780,1102],[805,1080],[840,1058],[880,1032],[930,1002],[981,968],[1020,937],[1060,900],[1105,845],[1140,775],[1165,710],[1190,640],[1215,575],[1240,490],[1265,400],[1290,320],[1310,262],[1330,205],[1345,145],[1360,90],[1385,0]].map(([x,y])=>[1930+x/.996,1200+y/2.676]).concat([[3343.600,1171.700],[3372,1147.700],[3406,1125]]);
  const f=x=>{if(x<k[0][0])return 1724;for(let i=0;i<k.length-1;i++)if(x<=k[i+1][0])return k[i][1]+(k[i+1][1]-k[i][1])*(x-k[i][0])/(k[i+1][0]-k[i][0]);return 1126;};
  let a='',b='';const w=3.807;
  for(let x=3404-w*330;x<3403;x+=w){const y=Math.min(1724,f(x+w/2)).toFixed(1);a+=`M${x.toFixed(2)} 1724V${y}h${w}V1724Z`;b+=`M${x.toFixed(2)} 1724V${y}`;}
  let h=`<path d="${a}" fill="#a6c9e0"/><path d="${b}" stroke="#c4dcec" stroke-width="1.300"/>`;
  h+='<path d="M2125.500 1127V1725" stroke="#000" stroke-width="1.500"/><path d="M2124.500 1724.700H3464" stroke="#000" stroke-width="2"/>';
  [['25,000,000',1169.300],['20,000,000',1280.500],['15,000,000',1391.500],['10,000,000',1502.500],['5,000,000',1613.500],['0',1724.500]].forEach(([t,y])=>h+=`<path d="M2118 ${y}h7" stroke="#333" stroke-width="2"/><text x="2115" y="${y+7}" text-anchor="end">${t}</text>`);
  [['Apr',2219],['Jul',2565.500],['Oct',2915],['Jan',3265]].forEach(([t,x])=>h+=`<path d="M${x} 1725.500v6" stroke="#333" stroke-width="2"/><text x="${x}" y="1755" text-anchor="middle">${t}</text>`);
  r.querySelector('svg').innerHTML=h;
});

make('dash-app',`<style>:host{display:block}
main{box-sizing:border-box;display:flex;align-items:flex-start;gap:53px;height:1695px;padding:27px 10px 0 27px;box-shadow:inset 8px 0 8px -4px rgba(0,0,0,.42);overflow:hidden}
.left{width:1867px;flex:none}.right{width:1547px;flex:none;display:flex;flex-direction:column;gap:35px}
map-card{margin-top:27px}.tiles{display:flex;justify-content:space-between;padding:0 27px;margin-top:35px}</style>
<nav-bar>COVID-19 Dashboard</nav-bar>
<main><section class="left"><search-field>Search for a County:</search-field><map-card></map-card>
<div class="tiles">
<stat-tile style="--tile:#f39c12"><span slot="value">26,957,001</span>CASES<svg slot="icon" viewBox="0 0 448 512"><path d="M224 256c70.700 0 128-57.300 128-128S294.700 0 224 0 96 57.300 96 128s57.300 128 128 128zm89.600 32h-16.700c-22.200 10.200-46.900 16-72.900 16s-50.600-5.800-72.900-16h-16.700C60.200 288 0 348.200 0 422.400V464c0 26.500 21.500 48 48 48h352c26.500 0 48-21.500 48-48v-41.600c0-74.200-60.200-134.400-134.400-134.400z"/></svg></stat-tile>
<stat-tile style="--tile:#dd4b39"><span slot="value">105,027</span>DEATHS<svg slot="icon" viewBox="0 0 512 512"><path d="M256 0C114.600 0 0 100.300 0 224c0 70.100 36.900 132.600 94.500 173.700 9.600 6.900 15.200 18.100 13.500 29.900l-9.400 66.200c-1.400 9.600 6 18.200 15.700 18.200H192v-56c0-4.400 3.600-8 8-8h16c4.400 0 8 3.600 8 8v56h64v-56c0-4.400 3.600-8 8-8h16c4.400 0 8 3.600 8 8v56h77.700c9.700 0 17.100-8.600 15.700-18.200l-9.400-66.200c-1.700-11.700 3.800-23 13.500-29.900C475.100 356.600 512 294.100 512 224 512 100.300 397.400 0 256 0zm-96 320c-35.300 0-64-28.700-64-64s28.700-64 64-64 64 28.700 64 64-28.700 64-64 64zm192 0c-35.300 0-64-28.700-64-64s28.700-64 64-64 64 28.700 64 64-28.700 64-64 64z"/></svg></stat-tile>
<stat-tile style="--tile:#111"><span slot="value">1.7%</span>DEATH RATE<svg slot="icon" viewBox="0 0 512 512"><path d="M462.300 62.600C407.500 15.900 326 24.300 275.700 76.200L256 96.500l-19.700-20.300C186.100 24.300 104.500 15.900 49.700 62.600c-62.800 53.600-66.100 149.800-9.900 207.900l193.500 199.800c12.500 12.900 32.800 12.900 45.300 0l193.500-199.800c56.300-58.100 53-154.300-9.800-207.900z"/></svg></stat-tile>
</div></section>
<section class="right">
<tab-panel heading="COUNTY STATISTICS" tabs="Chart|Daily Deaths|Daily Cases|Cumaltive Cases/Deaths"><county-chart></county-chart></tab-panel>
<tab-panel heading="USA STATISTICS" tabs="Cumulative Deaths|Cumulative Cases"><usa-chart></usa-chart></tab-panel>
</section></main>`);
</script>
</body>
</html>
